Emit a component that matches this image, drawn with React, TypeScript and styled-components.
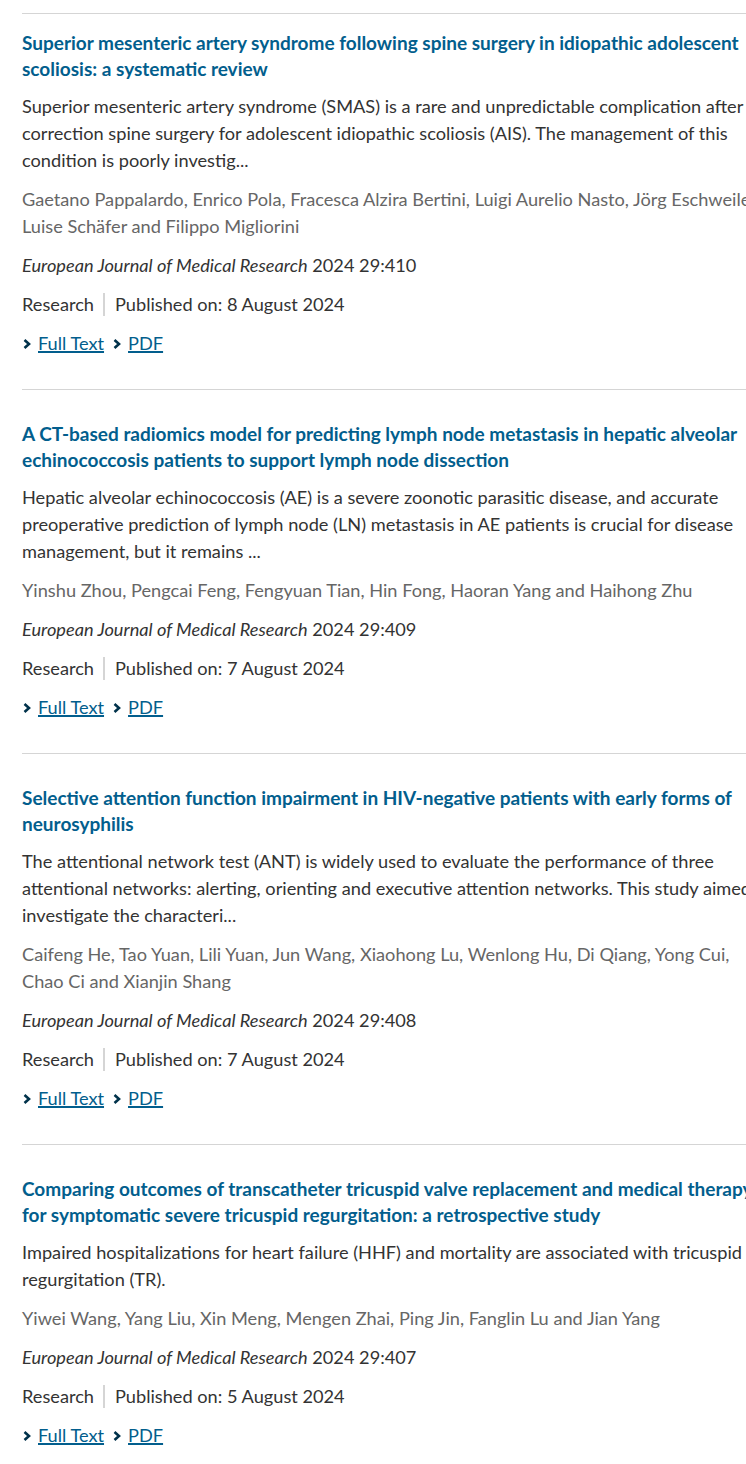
import React from "react";
import styled, { createGlobalStyle } from "styled-components";

const GlobalStyle = createGlobalStyle`
	body {
		margin: 0;
		background: #fff;
		overflow-x: hidden;
		font-family: Lato, "Noto Sans", sans-serif;
		color: #333;
	}
`;

type TArticle = {
	title: string;
	abstract: string;
	authors: string;
	volume: string;
	published: string;
};

const articles: TArticle[] = [
	{
		title:
			"Superior mesenteric artery syndrome following spine surgery in idiopathic adolescent scoliosis: a systematic review",
		abstract:
			"Superior mesenteric artery syndrome (SMAS) is a rare and unpredictable complication after correction spine surgery for adolescent idiopathic scoliosis (AIS). The management of this condition is poorly investig...",
		authors:
			"Gaetano Pappalardo, Enrico Pola, Fracesca Alzira Bertini, Luigi Aurelio Nasto, Jörg Eschweiler, Luise Schäfer and Filippo Migliorini",
		volume: "2024 29:410",
		published: "8 August 2024",
	},
	{
		title:
			"A CT-based radiomics model for predicting lymph node metastasis in hepatic alveolar echinococcosis patients to support lymph node dissection",
		abstract:
			"Hepatic alveolar echinococcosis (AE) is a severe zoonotic parasitic disease, and accurate preoperative prediction of lymph node (LN) metastasis in AE patients is crucial for disease management, but it remains ...",
		authors:
			"Yinshu Zhou, Pengcai Feng, Fengyuan Tian, Hin Fong, Haoran Yang and Haihong Zhu",
		volume: "2024 29:409",
		published: "7 August 2024",
	},
	{
		title:
			"Selective attention function impairment in HIV-negative patients with early forms of neurosyphilis",
		abstract:
			"The attentional network test (ANT) is widely used to evaluate the performance of three attentional networks: alerting, orienting and executive attention networks. This study aimed to investigate the characteri...",
		authors:
			"Caifeng He, Tao Yuan, Lili Yuan, Jun Wang, Xiaohong Lu, Wenlong Hu, Di Qiang, Yong Cui, Chao Ci and Xianjin Shang",
		volume: "2024 29:408",
		published: "7 August 2024",
	},
	{
		title:
			"Comparing outcomes of transcatheter tricuspid valve replacement and medical therapy for symptomatic severe tricuspid regurgitation: a retrospective study",
		abstract:
			"Impaired hospitalizations for heart failure (HHF) and mortality are associated with tricuspid regurgitation (TR).",
		authors:
			"Yiwei Wang, Yang Liu, Xin Meng, Mengen Zhai, Ping Jin, Fanglin Lu and Jian Yang",
		volume: "2024 29:407",
		published: "5 August 2024",
	},
];

const List = styled.ul`
	list-style: none;
	margin: 0;
	padding: 13px 0 0 22px;
	width: 752px;
`;

const Item = styled.li<{ first?: boolean }>`
	display: flex;
	flex-direction: column;
	gap: 12px;
	border-top: 1px solid #d5d5d5;
	padding: ${({ first }) => (first ? "16px" : "31px")} 0 32px;
`;

const Title = styled.h3`
	margin: 0;
	font-size: 19px;
	font-weight: 700;
	line-height: 25.5px;

	a {
		color: #025e8d;
		text-decoration: none;
	}
`;

const Text = styled.p<{ muted?: boolean }>`
	margin: 0;
	font-size: 18.2px;
	line-height: 27px;
	color: ${({ muted }) => (muted ? "#666" : "#333")};
`;

const Meta = styled.div`
	display: flex;
	align-items: center;
	font-size: 18.2px;
	line-height: 27px;
	color: #333;
`;

const Published = styled.span`
	margin-left: 9px;
	padding-left: 10px;
	border-left: 2px solid #d5d5d5;
	line-height: 23px;
`;

const Links = styled.div`
	display: flex;
	gap: 8px;
	font-size: 18.2px;
	line-height: 27px;
`;

const ArrowLink = styled.a`
	display: inline-flex;
	align-items: center;
	gap: 6px;
	color: #025e8d;

	svg {
		flex-shrink: 0;
	}
	span {
		text-decoration: underline;
		text-underline-offset: 2px;
	}
`;

const Chevron = () => (
	<svg width="10" height="12" viewBox="0 0 10 12" aria-hidden>
		<path d="M2.5 2 L7 6 L2.5 10" fill="none" stroke="#01324b" strokeWidth="2.6" />
	</svg>
);

const ArticleItem = ({ article, first }: { article: TArticle; first?: boolean }) => (
	<Item first={first}>
		<Title>
			<a href="#">{article.title}</a>
		</Title>
		<Text>{article.abstract}</Text>
		<Text muted>{article.authors}</Text>
		<Text>
			<i>European Journal of Medical Research</i> {article.volume}
		</Text>
		<Meta>
			<span>Research</span>
			<Published>Published on: {article.published}</Published>
		</Meta>
		<Links>
			<ArrowLink href="#">
				<Chevron />
				<span>Full Text</span>
			</ArrowLink>
			<ArrowLink href="#">
				<Chevron />
				<span>PDF</span>
			</ArrowLink>
		</Links>
	</Item>
);

export default function App() {
	return (
		<>
			<GlobalStyle />
			<List>
				{articles.map((a, i) => (
					<ArticleItem key={a.volume} article={a} first={i === 0} />
				))}
			</List>
		</>
	);
}
